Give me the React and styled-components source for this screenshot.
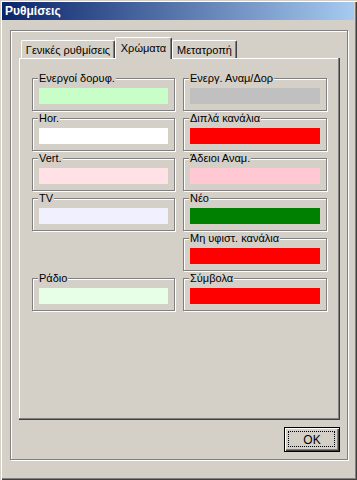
import React from 'react';
import styled, { createGlobalStyle } from 'styled-components';

const Global = createGlobalStyle`
  html, body { margin: 0; padding: 0; background: #D4D0C8; }
  body {
    width: 357px; height: 480px; overflow: hidden;
    font-family: "Liberation Sans", Arial, sans-serif;
    font-size: 11px; color: #000;
  }
  * { box-sizing: border-box; }
`;

const Window = styled.div`
  width: 357px;
  height: 480px;
  background: #D4D0C8;
  padding: 2px 3px 3px 2px;
  display: flex;
  flex-direction: column;
  box-shadow: inset 1px 1px 0 #D4D0C8, inset 2px 2px 0 #fff,
    inset -1px -1px 0 #404040, inset -2px -2px 0 #808080;
`;

const TitleBar = styled.div`
  height: 18px;
  flex: none;
  display: flex;
  align-items: center;
  padding-left: 3px;
  background: linear-gradient(to right, #0A246A, #A6CAF0);
  color: #fff;
  font-weight: bold;
  font-size: 12px;
`;

const Frame = styled.div`
  margin: 10px 0 0 8px;
  width: 338px;
  height: 430px;
  border: 1px solid #808080;
  box-shadow: inset 1px 1px 0 #fff, 1px 1px 0 #fff;
  padding: 6px 7px 7px 8px;
  display: flex;
  flex-direction: column;
`;

const TabRow = styled.div`
  display: flex;
  align-items: flex-end;
  height: 21px;
  padding-left: 2px;
  position: relative;
  z-index: 2;
`;

const Tab = styled.div`
  width: ${p => p.$w}px;
  height: ${p => (p.$active ? 22 : 18)}px;
  margin-bottom: ${p => (p.$active ? -1 : 0)}px;
  display: flex;
  align-items: center;
  justify-content: center;
  padding-bottom: ${p => (p.$active ? 2 : 0)}px;
  background: #D4D0C8;
  border-top: 1px solid #fff;
  border-left: 1px solid #fff;
  border-right: 1px solid #404040;
  border-radius: 2px 2px 0 0;
  box-shadow: inset -1px 0 0 #808080;
  white-space: nowrap;
`;

const Panel = styled.div`
  width: 321px;
  height: 362px;
  flex: none;
  background: #D4D0C8;
  box-shadow: inset -1px -1px 0 #404040, inset -2px -2px 0 #808080,
    inset 1px 1px 0 #fff;
  padding: 14px 0 0 13px;
  display: grid;
  grid-template-columns: 143px 144px;
  grid-template-rows: repeat(6, 40px);
  grid-auto-flow: column;
  column-gap: 8px;
`;

const Group = styled.fieldset`
  margin: 0;
  min-width: 0;
  height: 39px;
  padding: 3px 6px 0 6px;
  border: 1px solid #808080;
  box-shadow: inset 1px 1px 0 #fff, 1px 1px 0 #fff;
`;

const Legend = styled.legend`
  padding: 0 1px;
  margin-left: -1px;
  line-height: 13px;
  background: #D4D0C8;
  font-size: 11px;
  white-space: nowrap;
`;

const Swatch = styled.div`
  height: 16px;
  background: ${p => p.$color};
`;

const Empty = styled.div``;

const Footer = styled.div`
  display: flex;
  justify-content: flex-end;
  width: 321px;
  margin-top: 7px;
`;

const Button = styled.button`
  position: relative;
  width: 56px;
  height: 25px;
  padding: 0;
  background: #D4D0C8;
  border: 1px solid #000;
  box-shadow: inset 1px 1px 0 #fff, inset -1px -1px 0 #404040,
    inset -2px -2px 0 #808080;
  font-family: "Liberation Sans", Arial, sans-serif;
  font-size: 12px;
  color: #000;
  &::after {
    content: "";
    position: absolute;
    inset: 3px 4px 4px 3px;
    border: 1px dotted #000;
  }
`;

const left = [
  { label: 'Ενεργοί δορυφ.', color: '#C8FFC8' },
  { label: 'Hor.', color: '#FFFFFF' },
  { label: 'Vert.', color: '#FFE1E6' },
  { label: 'TV', color: '#F0F0FF' },
  null,
  { label: 'Ράδιο', color: '#E6FFE6' },
];

const right = [
  { label: 'Ενεργ. Αναμ/Δορ', color: '#C0C0C0' },
  { label: 'Διπλά κανάλια', color: '#FF0000' },
  { label: 'Άδειοι Αναμ.', color: '#FFC8D2' },
  { label: 'Νέο', color: '#008000' },
  { label: 'Μη υφιστ. κανάλια', color: '#FF0000' },
  { label: 'Σύμβολα', color: '#FF0000' },
];

const renderItem = (item, i) =>
  item ? (
    <Group key={item.label}>
      <Legend>{item.label}</Legend>
      <Swatch $color={item.color} />
    </Group>
  ) : (
    <Empty key={'e' + i} />
  );

export default function App() {
  return (
    <>
      <Global />
      <Window>
        <TitleBar>Ρυθμίσεις</TitleBar>
        <Frame>
          <TabRow>
            <Tab $w={94}>Γενικές ρυθμίσεις</Tab>
            <Tab $w={57} $active>Χρώματα</Tab>
            <Tab $w={65}>Μετατροπή</Tab>
          </TabRow>
          <Panel>
            {left.map(renderItem)}
            {right.map(renderItem)}
          </Panel>
          <Footer>
            <Button>OK</Button>
          </Footer>
        </Frame>
      </Window>
    </>
  );
}
